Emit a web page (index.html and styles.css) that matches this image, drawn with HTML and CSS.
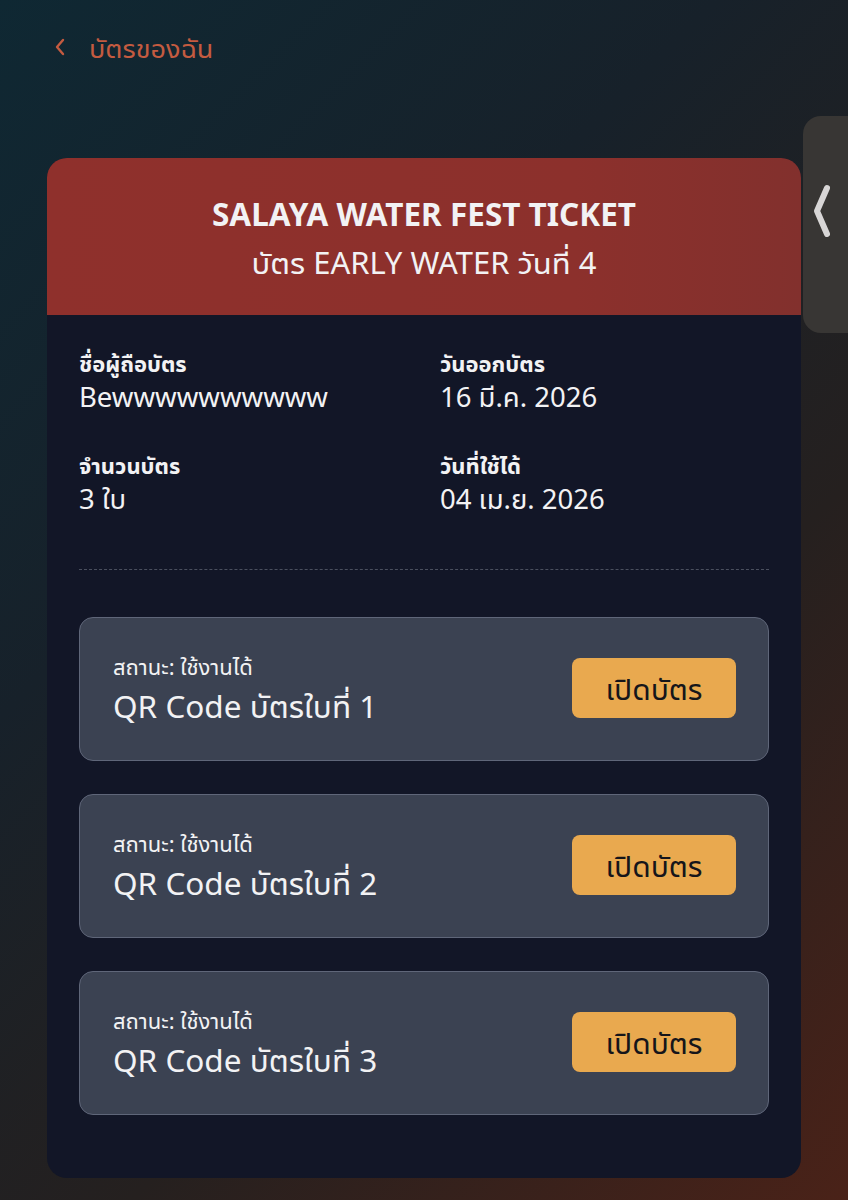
FILE: index.html
```html
<!DOCTYPE html>
<html lang="th">
  <head>
    <meta charset="utf-8">
    <meta name="viewport" content="width=device-width, initial-scale=1">
    <title>บัตรของฉัน</title>
    <link rel="stylesheet" href="styles.css">
  </head>
  <body>
    <div class="page">
      <a class="back" href="#">
        <svg width="14" height="20" viewBox="0 0 14 20"><path d="M10 3 L4 10 L10 17" fill="none" stroke="currentColor" stroke-width="2.4" stroke-linecap="round" stroke-linejoin="round"/></svg>
        <span>บัตรของฉัน</span>
      </a>

      <div class="side-tab">
        <svg width="20" height="56" viewBox="0 0 20 56"><path d="M15 4 L5 27 L15 50" fill="none" stroke="#d8d6d6" stroke-width="6" stroke-linecap="round" stroke-linejoin="round"/></svg>
      </div>

      <div class="ticket">
        <div class="ticket-head">
          <h1>SALAYA WATER FEST TICKET</h1>
          <p>บัตร EARLY WATER วันที่ 4</p>
        </div>
        <div class="ticket-body">
          <div class="info">
            <div class="field">
              <div class="label">ชื่อผู้ถือบัตร</div>
              <div class="value">Bewwwwwwwwww</div>
            </div>
            <div class="field">
              <div class="label">วันออกบัตร</div>
              <div class="value">16 มี.ค. 2026</div>
            </div>
            <div class="field">
              <div class="label">จำนวนบัตร</div>
              <div class="value">3 ใบ</div>
            </div>
            <div class="field">
              <div class="label">วันที่ใช้ได้</div>
              <div class="value">04 เม.ย. 2026</div>
            </div>
          </div>
          <hr class="divider">
          <div class="codes">
            <div class="code">
              <div>
                <div class="status">สถานะ: ใช้งานได้</div>
                <div class="code-name">QR Code บัตรใบที่ 1</div>
              </div>
              <button class="open">เปิดบัตร</button>
            </div>
            <div class="code">
              <div>
                <div class="status">สถานะ: ใช้งานได้</div>
                <div class="code-name">QR Code บัตรใบที่ 2</div>
              </div>
              <button class="open">เปิดบัตร</button>
            </div>
            <div class="code">
              <div>
                <div class="status">สถานะ: ใช้งานได้</div>
                <div class="code-name">QR Code บัตรใบที่ 3</div>
              </div>
              <button class="open">เปิดบัตร</button>
            </div>
          </div>
        </div>
      </div>
    </div>
  </body>
</html>
```

FILE: styles.css
```css
html, body {
  margin: 0;
  height: 100%;
}

body {
  font-family: "Noto Sans", "Noto Sans Thai UI", "Noto Sans Thai", sans-serif;
  color: #f2f2f4;
  background: linear-gradient(135deg, #0f2833 0%, #17212a 35%, #25201f 65%, #4a2218 100%);
  overflow: hidden;
}

.page {
  position: relative;
  padding: 26px 47px 0 47px;
}

.back {
  display: flex;
  align-items: center;
  gap: 22px;
  color: #c45b40;
  text-decoration: none;
  font-size: 27px;
  padding-left: 6px;
  height: 42px;
}

.side-tab {
  position: absolute;
  top: 116px;
  left: 803px;
  width: 60px;
  height: 217px;
  background: #383634;
  border-radius: 18px 0 0 18px;
  padding: 68px 0 0 9px;
  box-sizing: border-box;
}

.ticket {
  margin-top: 90px;
  width: 754px;
  border-radius: 20px;
  overflow: hidden;
  background: #121627;
}

.ticket-head {
  background: linear-gradient(90deg, #8f302c 0%, #8c302c 70%, #82302d 100%);
  height: 157px;
  box-sizing: border-box;
  padding-top: 36px;
  text-align: center;
}

.ticket-head h1 {
  margin: 0;
  font-size: 31.5px;
  font-weight: 700;
  line-height: 40px;
}

.ticket-head p {
  margin: 8px 0 0;
  font-size: 31px;
  line-height: 40px;
}

.ticket-body {
  padding: 34px 32px 63px 32px;
}

.info {
  display: grid;
  grid-template-columns: 361px 1fr;
  row-gap: 34px;
}

.label {
  font-size: 22px;
  font-weight: 700;
  line-height: 28px;
}

.value {
  font-size: 27.5px;
  line-height: 40px;
}

.divider {
  border: 0;
  border-top: 1.5px dashed #4a4f5e;
  margin: 50px 0 47px;
}

.codes {
  display: flex;
  flex-direction: column;
  gap: 33px;
}

.code {
  display: flex;
  align-items: center;
  justify-content: space-between;
  height: 144px;
  box-sizing: border-box;
  padding: 0 32px 0 33px;
  background: #3b4252;
  border: 1.5px solid #5f6679;
  border-radius: 14px;
}

.status {
  font-size: 22px;
  line-height: 30px;
  margin-bottom: 4px;
}

.code-name {
  font-size: 31.5px;
  line-height: 42px;
}

.open {
  width: 164px;
  height: 60px;
  border: 0;
  border-radius: 8px;
  background: #e9a94f;
  color: #15151a;
  font-family: inherit;
  font-size: 30px;
  margin-top: -2px;
}
```
